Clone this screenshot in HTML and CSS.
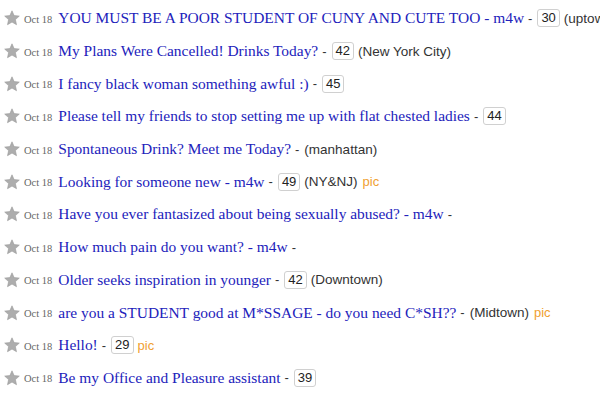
FILE: index.html
```html
<!DOCTYPE html>
<html lang="en">
<head>
<meta charset="UTF-8" />
<title>personals</title>
<link rel="stylesheet" href="styles.css">
</head>
<body>
  <ul class="rows">
    <li class="row">
      <span class="star"><svg viewBox="0 0 16 16"><path d="M8 0.8 L10.1 5.6 L15.3 6.1 L11.4 9.6 L12.5 14.7 L8 12.1 L3.5 14.7 L4.6 9.6 L0.7 6.1 L5.9 5.6 Z"/></svg></span>
      <span class="date">Oct 18</span>
      <a class="title" href="#">YOU MUST BE A POOR STUDENT OF CUNY AND CUTE TOO - m4w</a>
      <span class="sep">-</span>
      <span class="age">30</span>
      <span class="loc">(uptown)</span>
    </li>
    <li class="row">
      <span class="star"><svg viewBox="0 0 16 16"><path d="M8 0.8 L10.1 5.6 L15.3 6.1 L11.4 9.6 L12.5 14.7 L8 12.1 L3.5 14.7 L4.6 9.6 L0.7 6.1 L5.9 5.6 Z"/></svg></span>
      <span class="date">Oct 18</span>
      <a class="title" href="#">My Plans Were Cancelled! Drinks Today?</a>
      <span class="sep">-</span>
      <span class="age">42</span>
      <span class="loc">(New York City)</span>
    </li>
    <li class="row">
      <span class="star"><svg viewBox="0 0 16 16"><path d="M8 0.8 L10.1 5.6 L15.3 6.1 L11.4 9.6 L12.5 14.7 L8 12.1 L3.5 14.7 L4.6 9.6 L0.7 6.1 L5.9 5.6 Z"/></svg></span>
      <span class="date">Oct 18</span>
      <a class="title" href="#">I fancy black woman something awful :)</a>
      <span class="sep">-</span>
      <span class="age">45</span>
    </li>
    <li class="row">
      <span class="star"><svg viewBox="0 0 16 16"><path d="M8 0.8 L10.1 5.6 L15.3 6.1 L11.4 9.6 L12.5 14.7 L8 12.1 L3.5 14.7 L4.6 9.6 L0.7 6.1 L5.9 5.6 Z"/></svg></span>
      <span class="date">Oct 18</span>
      <a class="title" href="#">Please tell my friends to stop setting me up with flat chested ladies</a>
      <span class="sep">-</span>
      <span class="age">44</span>
    </li>
    <li class="row">
      <span class="star"><svg viewBox="0 0 16 16"><path d="M8 0.8 L10.1 5.6 L15.3 6.1 L11.4 9.6 L12.5 14.7 L8 12.1 L3.5 14.7 L4.6 9.6 L0.7 6.1 L5.9 5.6 Z"/></svg></span>
      <span class="date">Oct 18</span>
      <a class="title" href="#">Spontaneous Drink? Meet me Today?</a>
      <span class="sep">-</span>
      <span class="loc">(manhattan)</span>
    </li>
    <li class="row">
      <span class="star"><svg viewBox="0 0 16 16"><path d="M8 0.8 L10.1 5.6 L15.3 6.1 L11.4 9.6 L12.5 14.7 L8 12.1 L3.5 14.7 L4.6 9.6 L0.7 6.1 L5.9 5.6 Z"/></svg></span>
      <span class="date">Oct 18</span>
      <a class="title" href="#">Looking for someone new - m4w</a>
      <span class="sep">-</span>
      <span class="age">49</span>
      <span class="loc">(NY&amp;NJ)</span>
      <span class="pic">pic</span>
    </li>
    <li class="row">
      <span class="star"><svg viewBox="0 0 16 16"><path d="M8 0.8 L10.1 5.6 L15.3 6.1 L11.4 9.6 L12.5 14.7 L8 12.1 L3.5 14.7 L4.6 9.6 L0.7 6.1 L5.9 5.6 Z"/></svg></span>
      <span class="date">Oct 18</span>
      <a class="title" href="#">Have you ever fantasized about being sexually abused? - m4w</a>
      <span class="sep">-</span>
    </li>
    <li class="row">
      <span class="star"><svg viewBox="0 0 16 16"><path d="M8 0.8 L10.1 5.6 L15.3 6.1 L11.4 9.6 L12.5 14.7 L8 12.1 L3.5 14.7 L4.6 9.6 L0.7 6.1 L5.9 5.6 Z"/></svg></span>
      <span class="date">Oct 18</span>
      <a class="title" href="#">How much pain do you want? - m4w</a>
      <span class="sep">-</span>
    </li>
    <li class="row">
      <span class="star"><svg viewBox="0 0 16 16"><path d="M8 0.8 L10.1 5.6 L15.3 6.1 L11.4 9.6 L12.5 14.7 L8 12.1 L3.5 14.7 L4.6 9.6 L0.7 6.1 L5.9 5.6 Z"/></svg></span>
      <span class="date">Oct 18</span>
      <a class="title" href="#">Older seeks inspiration in younger</a>
      <span class="sep">-</span>
      <span class="age">42</span>
      <span class="loc">(Downtown)</span>
    </li>
    <li class="row">
      <span class="star"><svg viewBox="0 0 16 16"><path d="M8 0.8 L10.1 5.6 L15.3 6.1 L11.4 9.6 L12.5 14.7 L8 12.1 L3.5 14.7 L4.6 9.6 L0.7 6.1 L5.9 5.6 Z"/></svg></span>
      <span class="date">Oct 18</span>
      <a class="title" href="#">are you a STUDENT good at M*SSAGE - do you need C*SH??</a>
      <span class="sep">-</span>
      <span class="loc">(Midtown)</span>
      <span class="pic">pic</span>
    </li>
    <li class="row">
      <span class="star"><svg viewBox="0 0 16 16"><path d="M8 0.8 L10.1 5.6 L15.3 6.1 L11.4 9.6 L12.5 14.7 L8 12.1 L3.5 14.7 L4.6 9.6 L0.7 6.1 L5.9 5.6 Z"/></svg></span>
      <span class="date">Oct 18</span>
      <a class="title" href="#">Hello!</a>
      <span class="sep">-</span>
      <span class="age">29</span>
      <span class="pic">pic</span>
    </li>
    <li class="row">
      <span class="star"><svg viewBox="0 0 16 16"><path d="M8 0.8 L10.1 5.6 L15.3 6.1 L11.4 9.6 L12.5 14.7 L8 12.1 L3.5 14.7 L4.6 9.6 L0.7 6.1 L5.9 5.6 Z"/></svg></span>
      <span class="date">Oct 18</span>
      <a class="title" href="#">Be my Office and Pleasure assistant</a>
      <span class="sep">-</span>
      <span class="age">39</span>
    </li>
  </ul>
</body>
</html>
```

FILE: styles.css
```css
body {
  margin: 0;
  background: #ffffff;
  font-family: "Liberation Sans", Arial, sans-serif;
  overflow: hidden;
}
.rows {
  list-style: none;
  margin: 0;
  padding: 2px 0 0 4px;
}
.row {
  display: flex;
  align-items: center;
  height: 32.7px;
  white-space: nowrap;
  color: #333;
  font-size: 13px;
}
.star {
  width: 16px;
  height: 16px;
  margin-right: 4px;
}
.star svg {
  display: block;
  width: 16px;
  height: 16px;
  fill: #adadad;
  stroke: #9a9a9a;
  stroke-width: 0.6;
}
.date {
  font-family: "Liberation Serif", "Times New Roman", serif;
  font-size: 10.5px;
  color: #666;
  margin-right: 6px;
  padding-top: 2px;
}
.title {
  font-family: "Liberation Serif", "Times New Roman", serif;
  font-size: 15.45px;
  color: #2222bb;
  text-decoration: none;
}
.sep {
  margin: 0 5px 0 4px;
  color: #333;
}
.age {
  border: 1px solid #d0d0d0;
  border-radius: 3px;
  padding: 1px 3px;
  margin-right: 4px;
  color: #222;
  font-size: 13px;
  line-height: 14px;
}
.loc {
  color: #333;
  margin-right: 5px;
  font-size: 13.5px;
}
.pic {
  color: #f0a030;
  font-size: 13px;
}
```
